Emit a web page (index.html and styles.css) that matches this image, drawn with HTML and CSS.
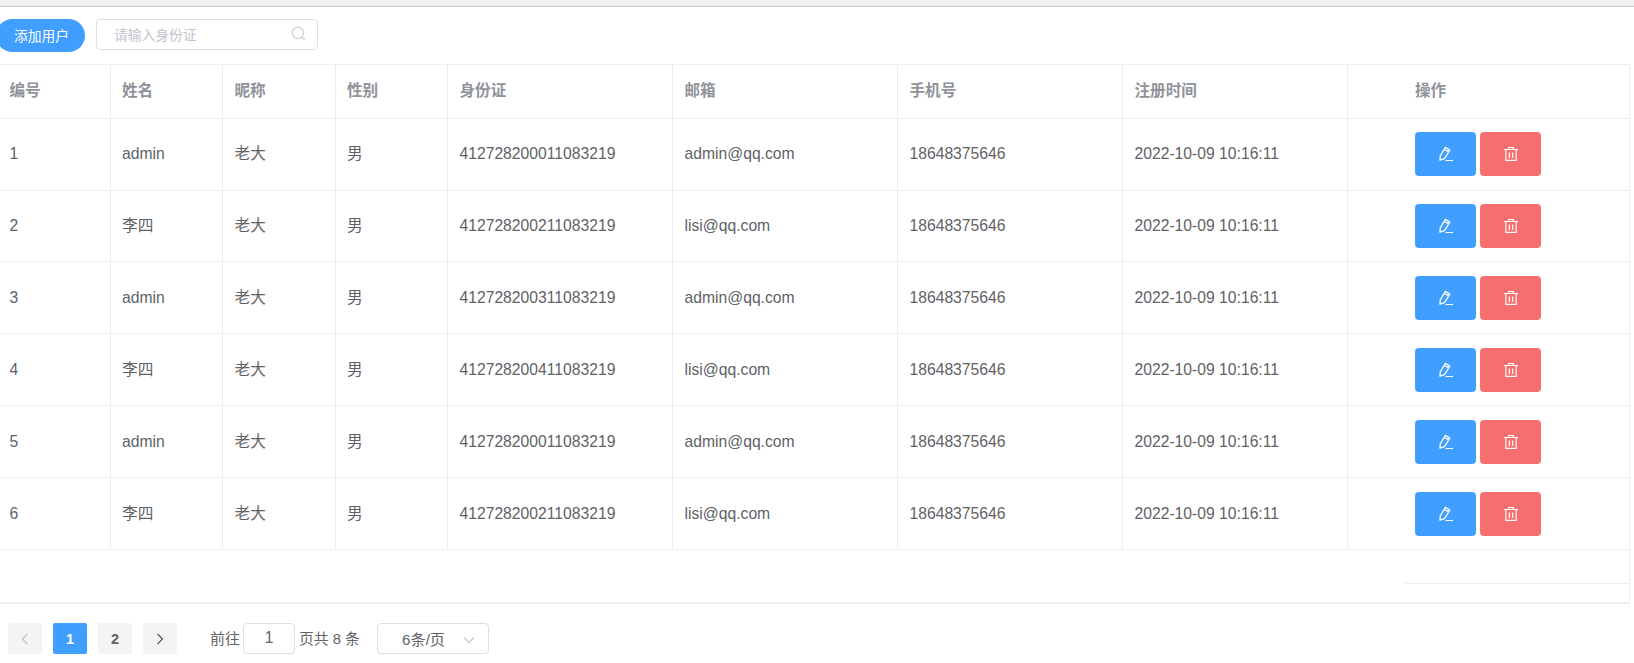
FILE: index.html
```html
<!DOCTYPE html>
<html lang="zh">
<head>
<meta charset="utf-8">
<title>用户管理</title>
<link rel="stylesheet" href="styles.css">
</head>
<body>
<svg class="defs" width="0" height="0">
  <symbol id="pencil" viewBox="0 0 18 18"><path d="M3.2 11L8.4 2.4l4.4 2.6-5.2 8.6-4.6 1.6z M7.3 4.3l4.4 2.6" fill="none" stroke="#fff" stroke-width="1.3" stroke-linejoin="round"/><path d="M8.4 15.5H16" stroke="#fff" stroke-width="1"/></symbol>
  <symbol id="trash" viewBox="0 0 16 16"><path d="M1 3.5h14M5.7 3.3V1.5h4.6v1.8M2.9 3.5v10.9h10.2V3.5M6.4 6.5v5.4M9.6 6.5v5.4" fill="none" stroke="#fff" stroke-width="1.2"/></symbol>
</svg>
<div class="strip"></div>
<div class="toolbar">
  <button class="add">添加用户</button>
  <div class="search">
    <span class="ph">请输入身份证</span>
    <svg class="search-ico" viewBox="0 0 16 16" width="15" height="15"><circle cx="7.3" cy="7.3" r="6" fill="none" stroke="#c0c4cc" stroke-width="1.1"/><path d="M11.8 11.8L14.6 14.6" stroke="#c0c4cc" stroke-width="1.1" fill="none"/></svg>
  </div>
</div>
<div class="panel">
  <table class="grid">
    <colgroup>
      <col class="c1"><col class="c1"><col class="c1"><col class="c1">
      <col class="c2"><col class="c2"><col class="c2"><col class="c2"><col class="c3">
    </colgroup>
    <thead>
      <tr><th>编号</th><th>姓名</th><th>昵称</th><th>性别</th><th>身份证</th><th>邮箱</th><th>手机号</th><th>注册时间</th><th class="ops">操作</th></tr>
    </thead>
    <tbody>
      <tr><td>1</td><td>admin</td><td class="zh">老大</td><td class="zh">男</td><td>412728200011083219</td><td>admin@qq.com</td><td>18648375646</td><td>2022-10-09 10:16:11</td><td class="ops"><div class="acts"><button class="act edit"><svg width="18" height="18"><use href="#pencil"/></svg></button><button class="act del"><svg width="16" height="16"><use href="#trash"/></svg></button></div></td></tr>
      <tr><td>2</td><td class="zh">李四</td><td class="zh">老大</td><td class="zh">男</td><td>412728200211083219</td><td>lisi@qq.com</td><td>18648375646</td><td>2022-10-09 10:16:11</td><td class="ops"><div class="acts"><button class="act edit"><svg width="18" height="18"><use href="#pencil"/></svg></button><button class="act del"><svg width="16" height="16"><use href="#trash"/></svg></button></div></td></tr>
      <tr><td>3</td><td>admin</td><td class="zh">老大</td><td class="zh">男</td><td>412728200311083219</td><td>admin@qq.com</td><td>18648375646</td><td>2022-10-09 10:16:11</td><td class="ops"><div class="acts"><button class="act edit"><svg width="18" height="18"><use href="#pencil"/></svg></button><button class="act del"><svg width="16" height="16"><use href="#trash"/></svg></button></div></td></tr>
      <tr><td>4</td><td class="zh">李四</td><td class="zh">老大</td><td class="zh">男</td><td>412728200411083219</td><td>lisi@qq.com</td><td>18648375646</td><td>2022-10-09 10:16:11</td><td class="ops"><div class="acts"><button class="act edit"><svg width="18" height="18"><use href="#pencil"/></svg></button><button class="act del"><svg width="16" height="16"><use href="#trash"/></svg></button></div></td></tr>
      <tr><td>5</td><td>admin</td><td class="zh">老大</td><td class="zh">男</td><td>412728200011083219</td><td>admin@qq.com</td><td>18648375646</td><td>2022-10-09 10:16:11</td><td class="ops"><div class="acts"><button class="act edit"><svg width="18" height="18"><use href="#pencil"/></svg></button><button class="act del"><svg width="16" height="16"><use href="#trash"/></svg></button></div></td></tr>
      <tr><td>6</td><td class="zh">李四</td><td class="zh">老大</td><td class="zh">男</td><td>412728200211083219</td><td>lisi@qq.com</td><td>18648375646</td><td>2022-10-09 10:16:11</td><td class="ops"><div class="acts"><button class="act edit"><svg width="18" height="18"><use href="#pencil"/></svg></button><button class="act del"><svg width="16" height="16"><use href="#trash"/></svg></button></div></td></tr>
    </tbody>
  </table>
  <div class="filler"><div class="fixed-line"></div></div>
</div>
<div class="pager">
  <span class="pg dim"><svg viewBox="0 0 10 14" width="10" height="14"><path d="M7.5 2L2.5 7l5 5" fill="none" stroke="#c0c4cc" stroke-width="1.4"/></svg></span>
  <span class="pg on">1</span>
  <span class="pg">2</span>
  <span class="pg"><svg viewBox="0 0 10 14" width="10" height="14"><path d="M2.5 2l5 5-5 5" fill="none" stroke="#606266" stroke-width="1.4"/></svg></span>
  <span class="goto">前往</span>
  <span class="jump">1</span>
  <span class="total">页共 8 条</span>
  <span class="size"><span class="size-label">6条/页</span><svg class="caret" viewBox="0 0 14 14" width="14" height="14"><path d="M2 4.5l5 5 5-5" fill="none" stroke="#c0c4cc" stroke-width="1.1"/></svg></span>
</div>
</body>
</html>
```
FILE: styles.css
```css
* { box-sizing: border-box; }
html, body { margin: 0; padding: 0; background: #fff; }
body {
  width: 1634px; height: 663px; overflow: hidden;
  font-family: "Liberation Sans", "Noto Sans CJK SC", sans-serif;
  font-size: 15.7px; color: #606266;
}
.defs { position: absolute; }
.strip { height: 7px; background: #f0f0f0; border-bottom: 1px solid #c9c9c9; }
.toolbar { height: 57px; display: flex; align-items: flex-start; padding-top: 12px; margin-left: -4px; }
.add {
  width: 89px; height: 33px; border: 0; border-radius: 17px; background: #409eff; color: #fff;
  font: 13.75px "Liberation Sans", "Noto Sans CJK SC", sans-serif; padding: 0 0 2px 2px;
}
.search {
  margin-left: 11px; width: 222px; height: 31px; border: 1px solid #dcdfe6; border-radius: 4px;
  display: flex; align-items: center; justify-content: space-between; padding: 0 11px 2px 17px;
  font-size: 13.75px; color: #c0c4cc; background: #fff;
}
.panel { margin-left: -2px; width: 1632px; border-right: 1px solid #ebeef5; border-top: 1px solid #ebeef5; border-bottom: 2px solid #ebeef5; }
.grid { width: 1631px; table-layout: fixed; border-collapse: separate; border-spacing: 0; }
.c1 { width: 112.5px; }
.c2 { width: 225px; }
.c3 { width: 281px; }
.grid th, .grid td { border-right: 1px solid #ebeef5; border-bottom: 1px solid #ebeef5; padding: 0 0 0 11.5px; text-align: left; }
.grid th { height: 54px; padding-bottom: 6px; color: #909399; font-size: 15.6px; font-weight: bold; }
.grid td { height: 72px; }
.grid tbody tr:nth-child(2) td { height: 71px; }
.grid td.zh { padding-bottom: 3px; }
.grid tbody tr:first-child td { padding-bottom: 2px; }
.grid tbody tr:first-child td.zh { padding-bottom: 4px; }
.grid .ops { padding-left: 67px; border-right: 0; }
.grid tbody tr:first-child td.ops { padding-left: 67px; }
.acts { display: flex; gap: 4px; }
.act { width: 61px; height: 44px; border: 0; border-radius: 4px; display: flex; align-items: center; justify-content: center; padding: 0; }
.edit { background: #409eff; }
.del { background: #f76e6e; }
.filler { height: 52px; position: relative; }
.fixed-line { position: absolute; right: 0; top: 33px; width: 224px; border-top: 1px solid #ebeef5; }
.pager { display: flex; align-items: center; margin-top: 19px; padding-left: 8px; height: 31px; font-size: 15px; }
.pg { width: 34px; height: 31px; margin-right: 11px; border-radius: 2px; background: #f4f4f5; display: flex; align-items: center; justify-content: center; font-weight: bold; font-size: 14.4px; }
.pg.on { background: #409eff; color: #fff; }
.goto { margin-left: 22px; padding-bottom: 2px; }
.jump { margin-left: 3px; width: 52px; height: 31px; border: 1px solid #dcdfe6; border-radius: 4px; display: flex; align-items: center; justify-content: center; font-size: 15.6px; padding-bottom: 2px; }
.total { margin-left: 4px; width: 78px; padding-bottom: 2px; font-size: 14.8px; }
.size { width: 112px; height: 31px; border: 1px solid #dcdfe6; border-radius: 4px; display: flex; align-items: center; padding-left: 24px; justify-content: space-between; padding-right: 12px; }
.size-label { padding-bottom: 2px; font-size: 15.2px; }
.caret { margin-top: 3px; }
```
